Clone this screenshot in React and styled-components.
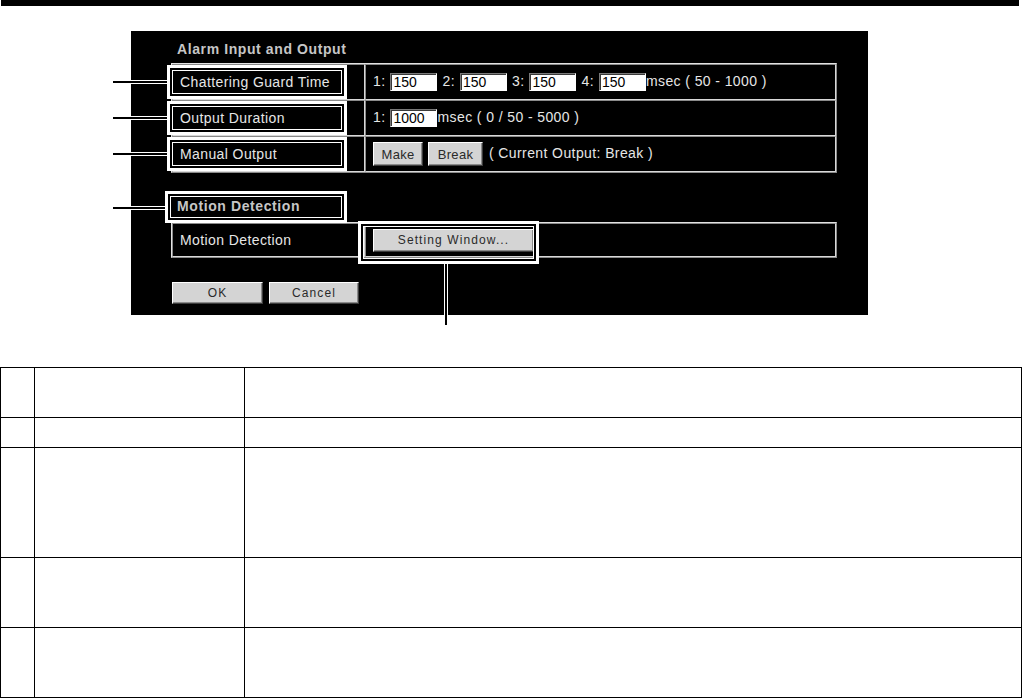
import styled, { createGlobalStyle, css } from 'styled-components'

const GlobalStyle = createGlobalStyle`
  html, body {
    margin: 0;
    padding: 0;
    background: #ffffff;
  }
  body {
    font-family: "Liberation Sans", Arial, sans-serif;
  }
`

/* annotation frame + leader line, drawn over the dialog */
const callout = css`
  &::before {
    content: '';
    position: absolute;
    left: ${p => p.$box[0]}px;
    top: ${p => p.$box[1]}px;
    width: ${p => p.$box[2]}px;
    height: ${p => p.$box[3]}px;
    box-sizing: border-box;
    border: 3px solid #ffffff;
    box-shadow: inset 0 0 0 2px #000000, inset 0 0 0 3px #ffffff;
    pointer-events: none;
    z-index: 2;
  }
  &::after {
    content: '';
    position: absolute;
    left: ${p => p.$lead[0]}px;
    top: ${p => p.$lead[1]}px;
    width: ${p => p.$lead[2]}px;
    height: ${p => p.$lead[3]}px;
    background: #000000;
    box-shadow: 0 0 0 1px #ffffff;
    z-index: 1;
  }
`

const Page = styled.div`
  width: 1022px;
  display: flex;
  flex-direction: column;
`

const TopRule = styled.div`
  height: 6px;
  margin: 0 3px 0 1px;
  background: #000000;
`

const Figure = styled.div`
  padding: 25px 0 0 131px;
`

const Panel = styled.div`
  width: 737px;
  height: 284px;
  box-sizing: border-box;
  background: #000000;
  padding: 10px 31px 0 40px;
  display: flex;
  flex-direction: column;
`

const SectionTitle = styled.div`
  position: relative;
  padding-left: 6px;
  margin-top: ${p => p.$gap || 0}px;
  font-size: 14px;
  font-weight: bold;
  letter-spacing: 0.6px;
  line-height: 16px;
  color: #c6c6c6;
  ${p => p.$box && callout}
`

const SettingsTable = styled.table`
  width: 666px;
  margin-top: ${p => p.$gap}px;
  border-collapse: separate;
  border-spacing: 0;
  border: 1px solid;
  border-color: #e2e2e2 #8a8a8a #8a8a8a #e2e2e2;
  color: #e6e6e6;
  font-size: 14px;
  letter-spacing: 0.4px;

  td {
    height: ${p => p.$rowH}px;
    padding: 0;
    border: 1px solid;
    border-color: #8a8a8a #d8d8d8 #d8d8d8 #8a8a8a;
    vertical-align: middle;
    white-space: nowrap;
  }
`

const LabelCell = styled.td`
  position: relative;
  width: 184px;
  && {
    padding-left: 7px;
  }
  ${p => p.$box && callout}
`

const ValueCell = styled.td`
  && {
    padding-left: 7px;
  }
`

const NumberField = styled.input`
  width: 47px;
  height: 18px;
  box-sizing: border-box;
  margin: 0 ${p => (p.$last ? 0 : 5)}px 0 5px;
  padding: 0 0 0 2px;
  border: 1px solid;
  border-color: #7a7a7a #ffffff #ffffff #7a7a7a;
  box-shadow: inset 1px 1px 0 #3a3a3a;
  background: #ffffff;
  color: #000000;
  font-family: "Liberation Sans", Arial, sans-serif;
  font-size: 14px;
  vertical-align: middle;
`

const PushButton = styled.button`
  box-sizing: border-box;
  width: ${p => p.$w}px;
  height: ${p => p.$h}px;
  margin: 0 ${p => p.$gap || 0}px 0 0;
  padding: 0;
  background: #d4d4d4;
  border: 1px solid;
  border-color: #ffffff #3c3c3c #3c3c3c #ffffff;
  box-shadow: inset -1px -1px 0 #8a8a8a;
  color: #2a2a2a;
  font-family: "Liberation Sans", Arial, sans-serif;
  font-size: ${p => (p.$spaced ? 12 : 13)}px;
  letter-spacing: ${p => (p.$spaced ? 1.1 : 0.3)}px;
  vertical-align: middle;
`

const ButtonMark = styled.span`
  position: relative;
  display: inline-block;
  vertical-align: middle;
  ${callout}
`

const ButtonRow = styled.div`
  display: flex;
  gap: 6px;
  margin-top: 24px;
  padding-left: 1px;
`

const DescTable = styled.table`
  width: 1022px;
  margin-top: 52px;
  border-collapse: collapse;
  table-layout: fixed;

  td {
    border: 1px solid #000000;
    padding: 0;
  }
`

const DescRow = styled.tr`
  td {
    height: ${p => p.$h - 1}px;
  }
`

const rowMark = { $box: [-6, 0, 180, 34], $lead: [-60, 16, 54, 2] }

const descRows = [50, 30, 110, 70, 70]

export default function App() {
  return (
    <Page>
      <GlobalStyle />
      <TopRule />
      <Figure>
        <Panel>
          <SectionTitle>Alarm Input and Output</SectionTitle>
          <SettingsTable $gap={6} $rowH={34}>
            <tbody>
              <tr>
                <LabelCell {...rowMark}>Chattering Guard Time</LabelCell>
                <ValueCell>
                  1:<NumberField defaultValue="150" />
                  2:<NumberField defaultValue="150" />
                  3:<NumberField defaultValue="150" />
                  4:<NumberField defaultValue="150" $last />
                  msec ( 50 - 1000 )
                </ValueCell>
              </tr>
              <tr>
                <LabelCell {...rowMark}>Output Duration</LabelCell>
                <ValueCell>
                  1:<NumberField defaultValue="1000" $last />
                  msec ( 0 / 50 - 5000 )
                </ValueCell>
              </tr>
              <tr>
                <LabelCell {...rowMark}>Manual Output</LabelCell>
                <ValueCell>
                  <PushButton $w={50} $h={24} $gap={5}>Make</PushButton>
                  <PushButton $w={55} $h={24} $gap={6}>Break</PushButton>
                  ( Current Output: Break )
                </ValueCell>
              </tr>
            </tbody>
          </SettingsTable>

          <SectionTitle $gap={25} $box={[-6, -7, 182, 32]} $lead={[-58, 9, 52, 2]}>
            Motion Detection
          </SectionTitle>
          <SettingsTable $gap={8} $rowH={32}>
            <tbody>
              <tr>
                <LabelCell>Motion Detection</LabelCell>
                <ValueCell>
                  <ButtonMark $box={[-15, -8, 181, 43]} $lead={[72, 35, 2, 61]}>
                    <PushButton $w={161} $h={23} $spaced>
                      Setting Window...
                    </PushButton>
                  </ButtonMark>
                </ValueCell>
              </tr>
            </tbody>
          </SettingsTable>

          <ButtonRow>
            <PushButton $w={91} $h={22} $spaced>OK</PushButton>
            <PushButton $w={90} $h={22} $spaced>Cancel</PushButton>
          </ButtonRow>
        </Panel>
      </Figure>

      <DescTable>
        <colgroup>
          <col style={{ width: 34 }} />
          <col style={{ width: 210 }} />
          <col />
        </colgroup>
        <tbody>
          {descRows.map((h, i) => (
            <DescRow key={i} $h={h}>
              <td />
              <td />
              <td />
            </DescRow>
          ))}
        </tbody>
      </DescTable>
    </Page>
  )
}
